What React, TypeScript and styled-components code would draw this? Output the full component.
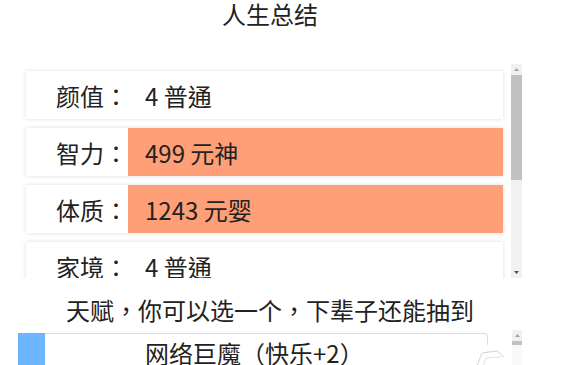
import styled, { createGlobalStyle } from "styled-components"

const GlobalStyle = createGlobalStyle`
  html, body {
    margin: 0;
    padding: 0;
    background: #fff;
  }
  body {
    font-family: "Noto Sans CJK TC", "Noto Sans CJK SC", "Noto Sans", sans-serif;
    color: #222;
  }
`

const Page = styled.div`
  position: relative;
  width: 561px;
  height: 365px;
  overflow: hidden;
`

const Column = styled.div`
  width: 504px;
  margin-left: 18px;
  display: flex;
  flex-direction: column;
`

const Title = styled.h2`
  margin: 0;
  height: 28px;
  line-height: 28px;
  text-align: center;
  font-size: 24px;
  font-weight: normal;
`

// a list window with a drawn scrollbar beside it
const ScrollBox = styled.div<{ $height: number; $top: number }>`
  display: flex;
  flex-shrink: 0;
  margin-top: ${p => p.$top}px;
  height: ${p => p.$height}px;
`

const Viewport = styled.div<{ $padTop: number; $gap: number }>`
  flex: 1;
  overflow: hidden;
  display: flex;
  flex-direction: column;
  gap: ${p => p.$gap}px;
  padding: ${p => p.$padTop}px 8px 0 8px;
`

const Track = styled.div<{ $width: number }>`
  width: ${p => p.$width}px;
  display: flex;
  flex-direction: column;
  background: #f1f1f1;
`

const ArrowButton = styled.div`
  height: 11px;
  flex-shrink: 0;
  display: flex;
  align-items: center;
  justify-content: center;
`

const Thumb = styled.div<{ $size: number }>`
  height: ${p => p.$size}px;
  flex-shrink: 0;
  background: #c1c1c1;
`

function Scrollbar({ width, thumb, dark }: { width: number; thumb: number; dark?: boolean }) {
  return (
    <Track $width={width}>
      <ArrowButton>
        <svg width="5" height="3" viewBox="0 0 5 3">
          <path d="M0 3L2.5 0L5 3Z" fill="#a3a3a3" />
        </svg>
      </ArrowButton>
      <Thumb $size={thumb} />
      <div style={{ flex: 1 }} />
      <ArrowButton>
        <svg width="5" height="3" viewBox="0 0 5 3">
          <path d="M0 0L2.5 3L5 0Z" fill={dark ? "#505050" : "#a3a3a3"} />
        </svg>
      </ArrowButton>
    </Track>
  )
}

const Row = styled.div`
  display: flex;
  flex-shrink: 0;
  height: 48px;
  background: #fff;
  box-shadow: 0 0 4px rgba(0, 0, 0, 0.14);
  font-size: 24px;
`

const Label = styled.div`
  width: 102px;
  display: flex;
  align-items: center;
  justify-content: flex-end;
`

const Value = styled.div<{ $grade: number }>`
  flex: 1;
  display: flex;
  align-items: center;
  padding-left: 17px;
  background: ${p => (p.$grade >= 2 ? "#ff9f78" : p.$grade === 1 ? "#9fd8ff" : "#fff")};
`

const Hint = styled.p`
  margin: 16px 0 0;
  line-height: 32px;
  text-align: center;
  font-size: 24px;
`

const Talent = styled.div`
  display: flex;
  flex-shrink: 0;
  width: 470px;
  height: 38px;
  margin-left: -8px;
  box-sizing: border-box;
  border: 1px solid #dcdcdc;
  border-left: none;
  border-radius: 0 4px 4px 0;
  font-size: 24px;
`

const TalentMark = styled.div<{ $color: string }>`
  width: 27px;
  margin: -1px 0;
  background: ${p => p.$color};
`

const TalentName = styled.div`
  display: flex;
  align-items: center;
  padding-left: 100px;
`

const Veil = styled.div`
  position: absolute;
  left: 443px;
  top: 345px;
  right: 0;
  bottom: 0;
  background: rgba(255, 255, 255, 0.9);
`

const summary = [
  { label: "颜值", value: "4 普通", grade: 0 },
  { label: "智力", value: "499 元神", grade: 3 },
  { label: "体质", value: "1243 元婴", grade: 3 },
  { label: "家境", value: "4 普通", grade: 0 },
  { label: "快乐", value: "6 幸福", grade: 1 },
  { label: "享年", value: "500 修仙", grade: 3 },
  { label: "总评", value: "2256 传说", grade: 3 },
]

const talents = [
  { name: "网络巨魔（快乐+2）", color: "#6cb6ff" },
  { name: "天赋异禀（智力+2）", color: "#6cb6ff" },
  { name: "白化病（颜值-2）", color: "#e0e0e0" },
]

export default function App() {
  return (
    <Page>
      <GlobalStyle />
      <Column>
        <Title>人生总结</Title>
        <ScrollBox $top={36} $height={214}>
          <Viewport $padTop={7} $gap={9}>
            {summary.map(item => (
              <Row key={item.label}>
                <Label>{item.label}：</Label>
                <Value $grade={item.grade}>{item.value}</Value>
              </Row>
            ))}
          </Viewport>
          <Scrollbar width={11} thumb={105} dark />
        </ScrollBox>
        <Hint>天赋，你可以选一个，下辈子还能抽到</Hint>
        <ScrollBox $top={4} $height={40}>
          <Viewport $padTop={3} $gap={8}>
            {talents.map(t => (
              <Talent key={t.name}>
                <TalentMark $color={t.color} />
                <TalentName>{t.name}</TalentName>
              </Talent>
            ))}
          </Viewport>
          <Scrollbar width={10} thumb={60} />
        </ScrollBox>
      </Column>
      <Veil>
        <svg width="118" height="20" viewBox="443 345 118 20">
          <path d="M477 366 L482 353 L497 351 L504 357" fill="none" stroke="#d4d4d4" strokeWidth="1" />
          <path d="M483 366 L486 358 L501 357" fill="none" stroke="#e2e2e2" strokeWidth="1" />
        </svg>
      </Veil>
    </Page>
  )
}
